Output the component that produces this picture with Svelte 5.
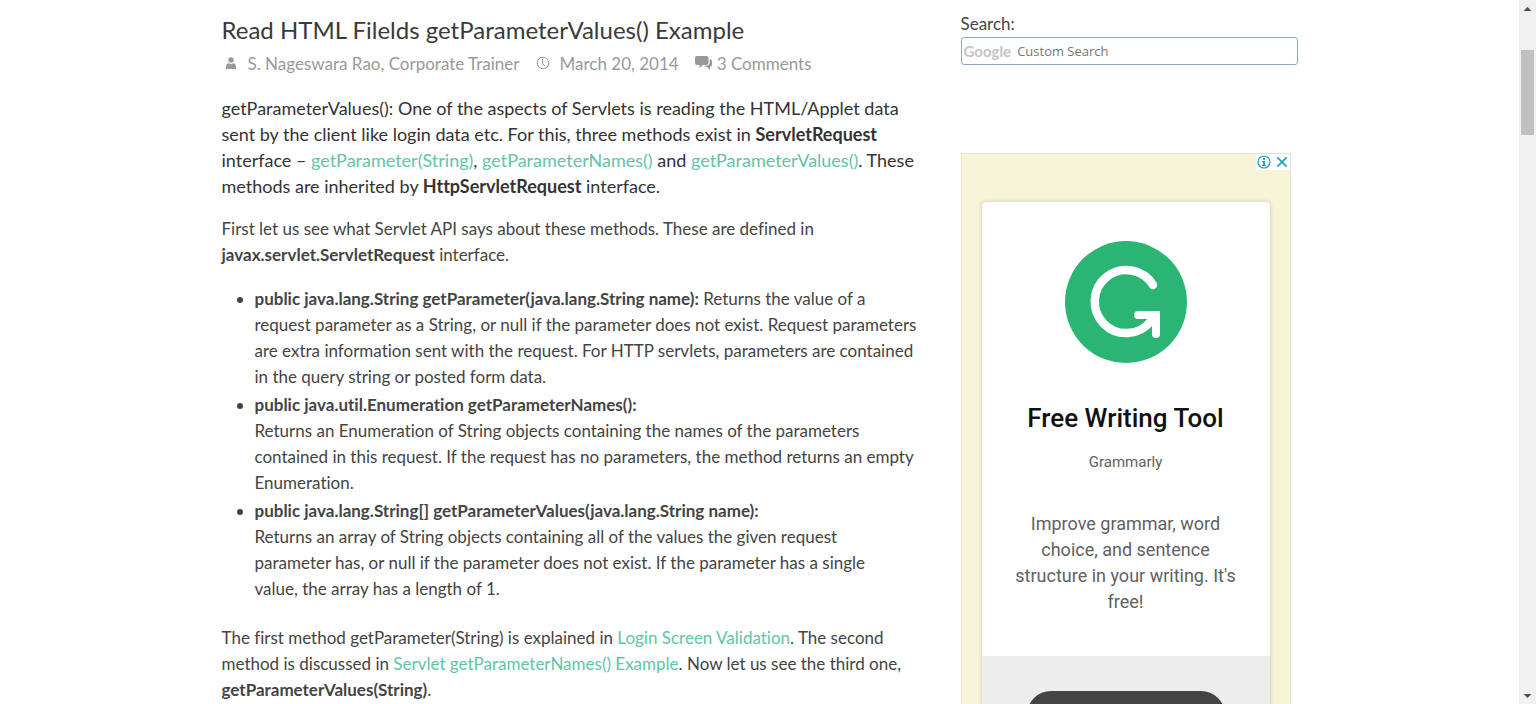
<script>
  const methods = [
    {
      signature: 'public java.lang.String getParameter(java.lang.String name):',
      inline: 'Returns the value of a',
      lines: [
        'request parameter as a String, or null if the parameter does not exist. Request parameters',
        'are extra information sent with the request. For HTTP servlets, parameters are contained',
        'in the query string or posted form data.'
      ]
    },
    {
      signature: 'public java.util.Enumeration getParameterNames():',
      inline: '',
      lines: [
        'Returns an Enumeration of String objects containing the names of the parameters',
        'contained in this request. If the request has no parameters, the method returns an empty',
        'Enumeration.'
      ]
    },
    {
      signature: 'public java.lang.String[] getParameterValues(java.lang.String name):',
      inline: '',
      lines: [
        'Returns an array of String objects containing all of the values the given request',
        'parameter has, or null if the parameter does not exist. If the parameter has a single',
        'value, the array has a length of 1.'
      ]
    }
  ];
</script>

<div class="window">
  <div class="page">
    <main>
      <article>
        <h1>Read HTML Filelds getParameterValues() Example</h1>
        <div class="meta">
          <span class="author">
            <svg width="18" height="16" viewBox="0 0 18 16" aria-hidden="true">
              <circle cx="9" cy="4" r="2.7" />
              <path d="M4 13v-2c0-2.500 1.300-3.700 3-3.700 1.200 .9 2.800 .9 4 0 1.700 0 3 1.200 3 3.700V13z" />
            </svg>
            S. Nageswara Rao, Corporate Trainer
          </span>
          <span class="date">
            <svg width="14" height="16" viewBox="0 0 14 16" aria-hidden="true">
              <circle cx="7" cy="7" r="5.800" class="line" />
              <path d="M6.500 3v4.500l2 2.500" class="line" />
            </svg>
            March 20, 2014
          </span>
          <span class="comments">
            <svg width="18" height="16" viewBox="0 0 18 16" aria-hidden="true">
              <path d="M2 0h9q2.500 0 2.500 2v5q0 2-2.500 2H8l-3.500 3.200V9H2Q0 9 0 7V2q0-2 2-2z" />
              <path d="M14.700 3q2.300 .2 2.300 2.200v3.500q0 2-2 2v3l-3.400-3H9.200l1.400-1.200q4.100 .2 4.100-3z" />
            </svg>
            3 Comments
          </span>
        </div>

        <p class="intro">
          getParameterValues(): One of the aspects of Servlets is reading the HTML/Applet data<br />
          sent by the client like login data etc. For this, three methods exist in <strong>ServletRequest</strong><br />
          interface – <a href="#get-parameter">getParameter(String)</a>, <a href="#get-names">getParameterNames()</a> and
          <a href="#get-values">getParameterValues()</a>. These<br />
          methods are inherited by <strong>HttpServletRequest</strong> interface.
        </p>
        <p>
          First let us see what Servlet API says about these methods. These are defined in<br />
          <strong>javax.servlet.ServletRequest</strong> interface.
        </p>
        <ul>
          {#each methods as method}
            <li>
              <strong>{method.signature}</strong> {method.inline}
              {#each method.lines as line}<br />{line}{/each}
            </li>
          {/each}
        </ul>
        <p>
          The first method getParameter(String) is explained in <a href="#login">Login Screen Validation</a>. The second<br />
          method is discussed in <a href="#names-example">Servlet getParameterNames() Example</a>. Now let us see the third one,<br />
          <strong>getParameterValues(String)</strong>.
        </p>
      </article>

      <aside>
        <form class="search">
          <label for="query">Search:</label>
          <div class="field">
            <span class="brand">Google</span>
            <input id="query" type="text" placeholder="Custom Search" />
          </div>
        </form>

        <section class="ad">
          <div class="choices">
            <button type="button" aria-label="Ad information">
              <svg width="14" height="14" viewBox="0 0 14 14">
                <circle cx="7" cy="7" r="6" fill="none" stroke="#1fa3c4" stroke-width="1.200" />
                <path d="M6 3h2v2H6zM5 6h3v4h1v1H5v-1h1V7H5z" fill="#1fa3c4" />
              </svg>
            </button>
            <button type="button" aria-label="Close ad">
              <svg width="14" height="14" viewBox="0 0 14 14">
                <path d="M2.300 2.300l9.400 9.400M11.700 2.300l-9.400 9.400" fill="none" stroke="#1fa3c4" stroke-width="1.800" />
              </svg>
            </button>
          </div>
          <div class="card">
            <svg class="logo" width="122" height="122" viewBox="0 0 122 122" role="img" aria-label="Grammarly">
              <circle cx="61" cy="61" r="61" fill="#2ab574" />
              <path d="M88 44A31.500 31.500 0 1 0 86 80" fill="none" stroke="#fff" stroke-width="8.500" stroke-linecap="round" />
              <path d="M73 74H91V93" fill="none" stroke="#fff" stroke-width="8" stroke-linecap="round" />
              <path d="M84 76l6-1-10 14z" fill="#fff" />
            </svg>
            <h2>Free Writing Tool</h2>
            <p class="advertiser">Grammarly</p>
            <p class="pitch">Improve grammar, word<br />choice, and sentence<br />structure in your writing. It's<br />free!</p>
            <div class="action"><button type="button" aria-label="Open"></button></div>
          </div>
        </section>
      </aside>
    </main>
  </div>

  <div class="scrollbar" aria-hidden="true">
    <svg width="17" height="17" viewBox="0 0 17 17"><path d="M4.500 11L8.500 7l4 4z" fill="#505050" /></svg>
    <div class="track"><div class="thumb"></div></div>
    <svg width="17" height="17" viewBox="0 0 17 17"><path d="M4.500 7l4 4 4-4z" fill="#505050" /></svg>
  </div>
</div>

<style>
  .window {
    display: flex;
    height: 100vh;
    overflow: hidden;
    background: #fff;
    color: #444;
    font: 17px/26px Lato, "Noto Sans", sans-serif;
    font-variant-ligatures: none;
  }
  .page {
    flex: 1;
    min-width: 0;
    overflow: hidden;
  }
  main {
    display: grid;
    grid-template-columns: minmax(0, 1fr) 337px;
    column-gap: 30px;
    max-width: 1076px;
    margin: 0 auto;
  }
  article {
    padding-top: 13px;
    white-space: nowrap;
  }
  h1 {
    margin: 0;
    color: #3a3a3a;
    font-size: 24px;
    font-weight: 400;
    line-height: 34px;
  }
  .meta {
    display: flex;
    gap: 16px;
    margin: 4px 0 18px;
    color: #999;
    font-size: 17px;
  }
  .meta span {
    display: flex;
    align-items: center;
  }
  .meta svg {
    fill: #999;
  }
  .meta .line {
    fill: none;
    stroke: #999;
  }
  .author {
    gap: 8px;
  }
  .date {
    gap: 10px;
  }
  .comments {
    gap: 4px;
  }
  p {
    margin: 0 0 17px;
  }
  .intro {
    color: #333;
    font-size: 18px;
  }
  a {
    color: #62c4a7;
    text-decoration: none;
  }
  ul {
    display: grid;
    gap: 2px;
    margin: 18px 0 23px;
    padding-left: 33px;
  }
  aside {
    padding-top: 10px;
  }
  label {
    display: block;
    line-height: 27px;
  }
  .field {
    display: flex;
    align-items: center;
    gap: 4px;
    height: 28px;
    box-sizing: border-box;
    padding: 0 2px;
    border: 1px solid #8fa9c0;
    border-radius: 3px;
  }
  .brand {
    color: #c4c4c4;
    font: 700 15px/20px Lato, sans-serif;
  }
  input {
    flex: 1;
    min-width: 0;
    padding: 0 2px;
    border: 0;
    outline: 0;
    background: none;
    color: #777;
    font: 13px/20px "Open Sans", sans-serif;
  }
  input::placeholder {
    color: #777;
  }
  .ad {
    position: relative;
    width: 330px;
    box-sizing: border-box;
    margin-top: 88px;
    padding: 48px 20px 0;
    border: 1px solid #e6e3cc;
    background: #f8f4d8;
  }
  .choices {
    position: absolute;
    top: 0;
    right: 0;
    display: flex;
    gap: 4px;
    padding: 1px;
    background: #fff;
  }
  button {
    display: block;
    padding: 0;
    border: 0;
    background: none;
    cursor: pointer;
  }
  .choices svg {
    display: block;
  }
  .card {
    overflow: hidden;
    border-radius: 4px;
    background: #fff;
    box-shadow: 0 0 4px rgba(0, 0, 0, 0.2);
    font-family: Roboto, sans-serif;
    text-align: center;
  }
  .logo {
    display: block;
    margin: 39px auto 0;
  }
  h2 {
    margin: 39px 0 15px;
    color: #111;
    font-size: 26px;
    font-weight: 500;
    line-height: 32px;
  }
  .advertiser {
    margin: 0 0 36px;
    color: #616161;
    font-size: 15px;
  }
  .pitch {
    margin: 0 0 41px;
    color: #616161;
    font-size: 18px;
  }
  .action {
    height: 160px;
    padding-top: 35px;
    background: #ededed;
  }
  .action button {
    width: 198px;
    height: 48px;
    margin: 0 auto;
    border-radius: 24px;
    background: #444;
  }
  .scrollbar {
    display: flex;
    flex-direction: column;
    width: 17px;
    background: #f1f1f1;
  }
  .scrollbar svg {
    display: block;
  }
  .track {
    flex: 1;
    padding: 33px 2px 0;
  }
  .thumb {
    height: 85px;
    background: #c1c1c1;
  }
</style>
